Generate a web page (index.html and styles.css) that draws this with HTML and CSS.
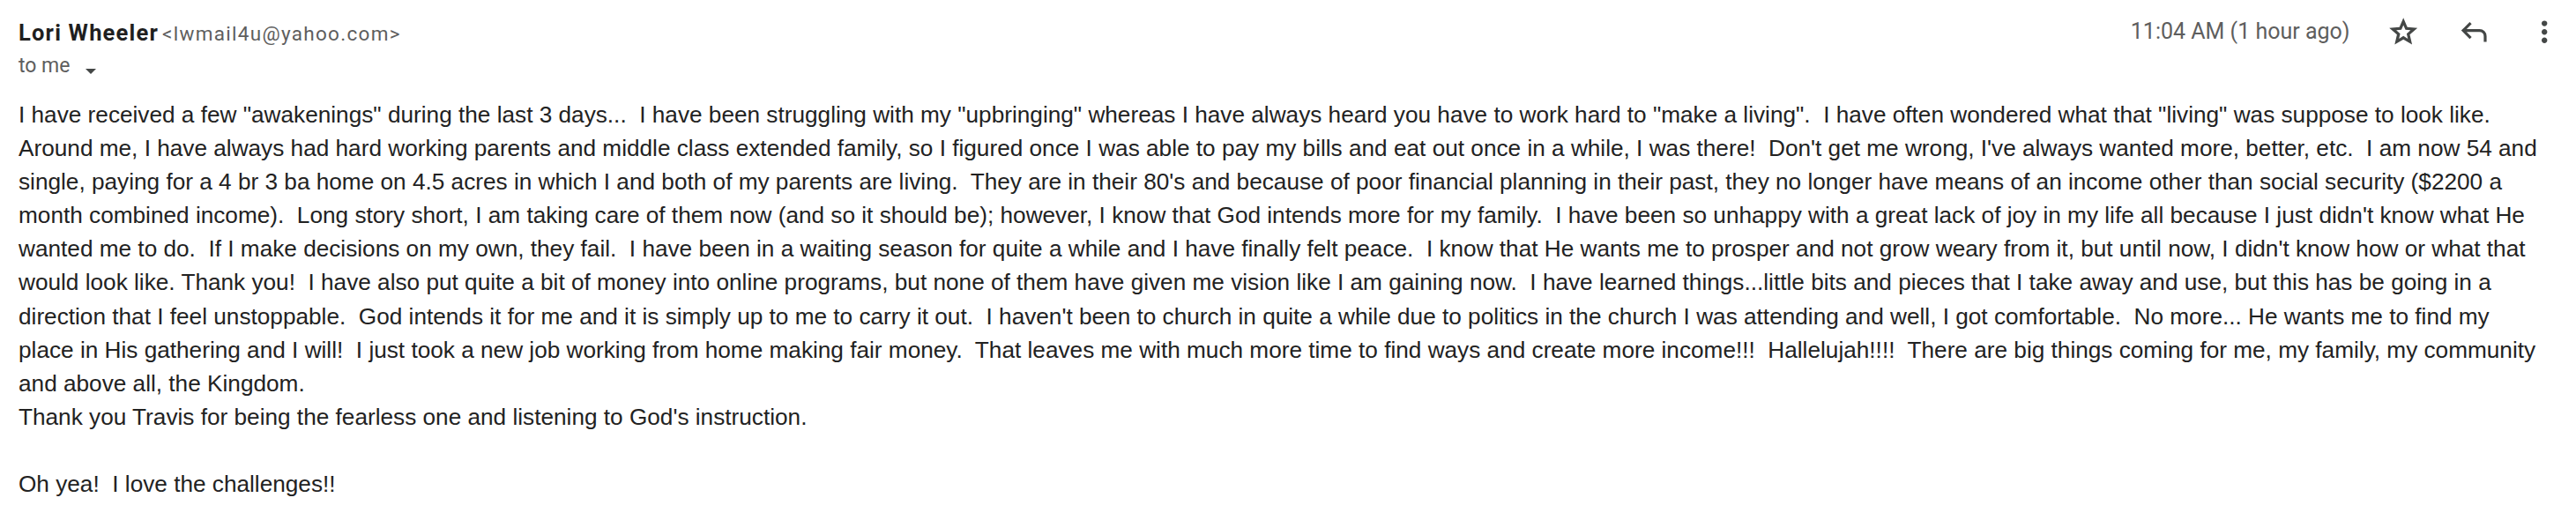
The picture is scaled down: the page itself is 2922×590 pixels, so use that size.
FILE: index.html
```html
<!DOCTYPE html>
<html>
<head>
<meta charset="utf-8">
<link rel="stylesheet" href="styles.css">
</head>
<body>
<div class="mail">
  <div class="header">
    <div class="sender">
      <div class="from"><span class="name">Lori Wheeler</span> <span class="addr">&lt;lwmail4u@yahoo.com&gt;</span></div>
      <div class="to"><span>to me</span><svg class="drop" viewBox="0 0 12 6" width="12" height="6"><path d="M0 0h12L6 6z"/></svg></div>
    </div>
    <div class="meta">
      <span class="time">11:04 AM (1 hour ago)</span>
      <span class="btn"><svg viewBox="0 -960 960 960" width="38.4" height="38.4"><path d="m354-287 126-76 126 77-33-144 111-96-146-13-57-136-57 135-146 13 111 97-33 143ZM233-120l65-281L80-590l288-25 112-265 112 265 288 25-218 189 65 281-247-149-247 149Zm247-350Z"/></svg></span>
      <span class="btn"><svg viewBox="0 -960 960 960" width="38.4" height="38.4"><path d="M760-200v-160q0-50-35-85t-85-35H273l144 144-57 56-240-240 240-240 57 56-144 144h367q83 0 141.5 58.5T840-360v160h-80Z"/></svg></span>
      <span class="btn"><svg viewBox="0 -960 960 960" width="38.4" height="38.4"><path d="M480-160q-33 0-56.5-23.5T400-240q0-33 23.5-56.5T480-320q33 0 56.5 23.5T560-240q0 33-23.5 56.5T480-160Zm0-240q-33 0-56.5-23.5T400-480q0-33 23.5-56.5T480-560q33 0 56.5 23.5T560-480q0 33-23.5 56.5T480-400Zm0-240q-33 0-56.5-23.5T400-720q0-33 23.5-56.5T480-800q33 0 56.5 23.5T560-720q0 33-23.5 56.5T480-640Z"/></svg></span>
    </div>
  </div>
  <div class="body">
    <div>I have received a few "awakenings" during the last 3 days...&nbsp; I have been struggling with my "upbringing" whereas I have always heard you have to work hard to "make a living".&nbsp; I have often wondered what that "living" was suppose to look like.<br>Around me, I have always had hard working parents and middle class extended family, so I figured once I was able to pay my bills and eat out once in a while, I was there!&nbsp; Don't get me wrong, I've always wanted more, better, etc.&nbsp; I am now 54 and<br>single, paying for a 4 br 3 ba home on 4.5 acres in which I and both of my parents are living.&nbsp; They are in their 80's and because of poor financial planning in their past, they no longer have means of an income other than social security ($2200 a<br>month combined income).&nbsp; Long story short, I am taking care of them now (and so it should be); however, I know that God intends more for my family.&nbsp; I have been so unhappy with a great lack of joy in my life all because I just didn't know what He<br>wanted me to do.&nbsp; If I make decisions on my own, they fail.&nbsp; I have been in a waiting season for quite a while and I have finally felt peace.&nbsp; I know that He wants me to prosper and not grow weary from it, but until now, I didn't know how or what that<br>would look like. Thank you!&nbsp; I have also put quite a bit of money into online programs, but none of them have given me vision like I am gaining now.&nbsp; I have learned things...little bits and pieces that I take away and use, but this has be going in a<br>direction that I feel unstoppable.&nbsp; God intends it for me and it is simply up to me to carry it out.&nbsp; I haven't been to church in quite a while due to politics in the church I was attending and well, I got comfortable.&nbsp; No more... He wants me to find my<br>place in His gathering and I will!&nbsp; I just took a new job working from home making fair money.&nbsp; That leaves me with much more time to find ways and create more income!!!&nbsp; Hallelujah!!!!&nbsp; There are big things coming for me, my family, my community<br>and above all, the Kingdom.</div>
    <div>Thank you Travis for being the fearless one and listening to God's instruction.</div>
    <div><br></div>
    <div>Oh yea!&nbsp; I love the challenges!!</div>
  </div>
</div>
</body>
</html>
```

FILE: styles.css
```css
html, body {
  margin: 0;
  padding: 0;
  background: #ffffff;
}

.mail {
  padding: 0 5.5px 0 21px;
}

.header {
  display: flex;
  justify-content: space-between;
  align-items: flex-start;
  padding-top: 16px;
}

.sender {
  display: flex;
  flex-direction: column;
  padding-top: 1px;
}

.from {
  font-family: Roboto, "Liberation Sans", sans-serif;
  line-height: 40px;
  height: 40px;
  white-space: nowrap;
}

.name {
  font-weight: 700;
  font-size: 25.5px;
  letter-spacing: 1.2px;
  color: #1f1f1f;
}

.addr {
  font-size: 22.5px;
  letter-spacing: 1.3px;
  color: #5e5e5e;
}

.to {
  font-family: Roboto, "Liberation Sans", sans-serif;
  font-size: 23px;
  line-height: 36px;
  height: 36px;
  color: #5e5e5e;
  display: flex;
  align-items: center;
  gap: 17px;
}

.drop {
  fill: #444746;
  margin-top: 12px;
}

.meta {
  display: flex;
  align-items: center;
  height: 40px;
  gap: 20px;
}

.time {
  font-family: Roboto, "Liberation Sans", sans-serif;
  font-size: 25px;
  line-height: 40px;
  color: #5e5e5e;
  margin-right: 11px;
  white-space: nowrap;
}

.btn {
  width: 60px;
  height: 40px;
  display: flex;
  align-items: center;
  justify-content: center;
}

.btn svg {
  fill: #444746;
}

.body {
  font-family: "Liberation Sans", Arial, Helvetica, sans-serif;
  font-size: 26.2px;
  line-height: 38.1px;
  color: #222222;
  padding-top: 18px;
}
```
